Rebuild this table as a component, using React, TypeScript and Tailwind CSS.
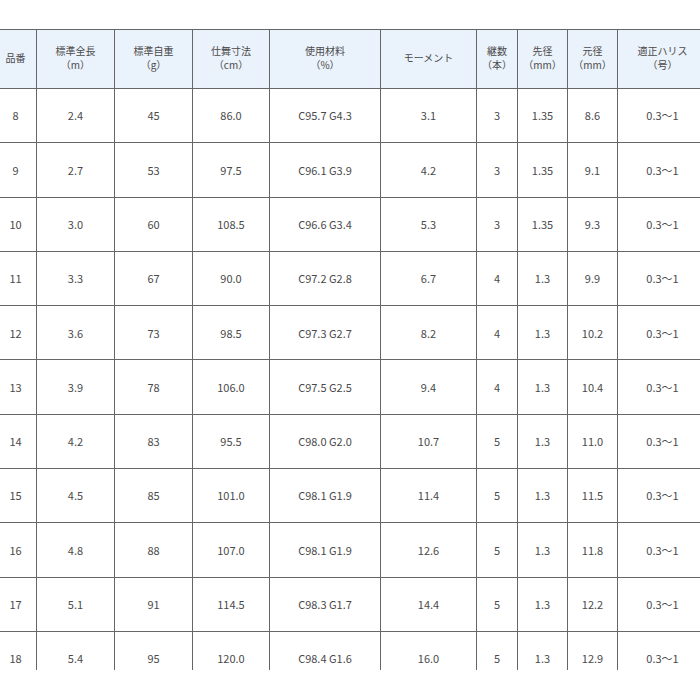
import React, { FC } from 'react';

const headers: [string, string | null][] = [
  ['品番', null],
  ['標準全長', '（m）'],
  ['標準自重', '（g）'],
  ['仕舞寸法', '（cm）'],
  ['使用材料', '（%）'],
  ['モーメント', null],
  ['継数', '（本）'],
  ['先径', '（mm）'],
  ['元径', '（mm）'],
  ['適正ハリス', '（号）'],
];

const widths = [42, 78, 78, 77, 111, 96, 41, 50, 50, 90];

const rows = [
  ['8', '2.4', '45', '86.0', 'C95.7 G4.3', '3.1', '3', '1.35', '8.6', '0.3～1'],
  ['9', '2.7', '53', '97.5', 'C96.1 G3.9', '4.2', '3', '1.35', '9.1', '0.3～1'],
  ['10', '3.0', '60', '108.5', 'C96.6 G3.4', '5.3', '3', '1.35', '9.3', '0.3～1'],
  ['11', '3.3', '67', '90.0', 'C97.2 G2.8', '6.7', '4', '1.3', '9.9', '0.3～1'],
  ['12', '3.6', '73', '98.5', 'C97.3 G2.7', '8.2', '4', '1.3', '10.2', '0.3～1'],
  ['13', '3.9', '78', '106.0', 'C97.5 G2.5', '9.4', '4', '1.3', '10.4', '0.3～1'],
  ['14', '4.2', '83', '95.5', 'C98.0 G2.0', '10.7', '5', '1.3', '11.0', '0.3～1'],
  ['15', '4.5', '85', '101.0', 'C98.1 G1.9', '11.4', '5', '1.3', '11.5', '0.3～1'],
  ['16', '4.8', '88', '107.0', 'C98.1 G1.9', '12.6', '5', '1.3', '11.8', '0.3～1'],
  ['17', '5.1', '91', '114.5', 'C98.3 G1.7', '14.4', '5', '1.3', '12.2', '0.3～1'],
  ['18', '5.4', '95', '120.0', 'C98.4 G1.6', '16.0', '5', '1.3', '12.9', '0.3～1'],
];

const App: FC = () => (
  <div className="w-[700px] h-[700px] overflow-hidden bg-white pt-[29px] font-['Noto_Sans_CJK_JP',sans-serif] text-[#4a4a4a]">
    <div className="h-[641px] overflow-hidden -ml-[6px] w-[713px]">
      <table className="table-fixed border-collapse w-[713px]">
        <colgroup>
          {widths.map((w, i) => (
            <col key={i} style={{ width: w }} />
          ))}
        </colgroup>
        <thead>
          <tr className="h-[59px] bg-[#eaf2fb]">
            {headers.map(([top, bottom], i) => (
              <th
                key={i}
                className="border border-[#666] p-0 pb-[3px] text-[10px] font-normal leading-[14px] text-center align-middle"
              >
                <div>{top}</div>
                {bottom && <div>{bottom}</div>}
              </th>
            ))}
          </tr>
        </thead>
        <tbody>
          {rows.map((row, r) => (
            <tr key={r} className="h-[54.3px]">
              {row.map((cell, c) => (
                <td
                  key={c}
                  className="border border-[#666] p-0 text-[11px] text-center align-middle"
                >
                  {cell}
                </td>
              ))}
            </tr>
          ))}
        </tbody>
      </table>
    </div>
  </div>
);

export default App;
